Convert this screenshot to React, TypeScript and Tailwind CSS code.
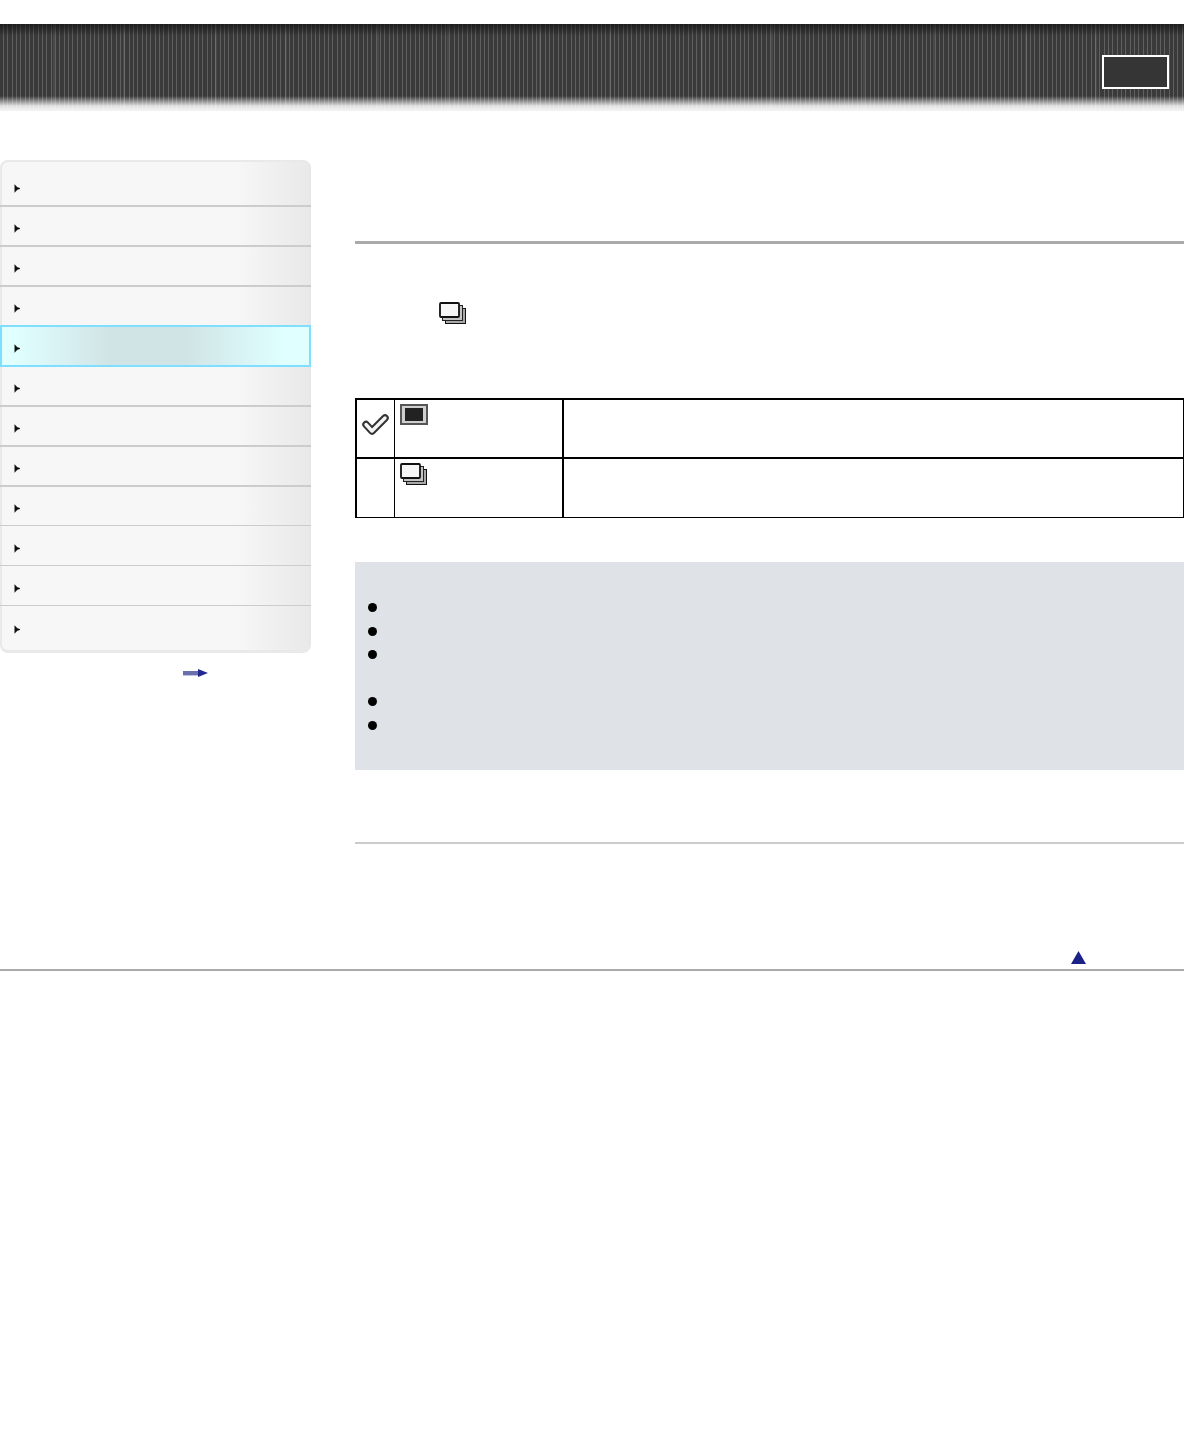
const navRowClass = [
  "-mx-[2px] flex h-[45px] items-end border-b-2 border-[#cccccc] pb-[12px] pl-[14px]",
  "-mx-[2px] flex h-[40px] items-end border-b-2 border-[#cccccc] pb-[12px] pl-[14px]",
  "-mx-[2px] flex h-[40px] items-end border-b-2 border-[#cccccc] pb-[12px] pl-[14px]",
  "-mx-[2px] flex h-[40px] items-end border-b-2 border-[#cccccc] pb-[12px] pl-[14px]",
  "-mx-[2px] -mt-[2px] flex h-[42px] items-end border-2 border-[#7fdfff] bg-[linear-gradient(to_right,#e0ffff_4%,#d0e4e6_35%,#d0e4e6_60%,#e0ffff_92%)] pb-[12px] pl-[12px]",
  "-mx-[2px] flex h-[40px] items-end border-b-2 border-[#cccccc] pb-[12px] pl-[14px]",
  "-mx-[2px] flex h-[40px] items-end border-b-2 border-[#cccccc] pb-[12px] pl-[14px]",
  "-mx-[2px] flex h-[40px] items-end border-b-2 border-[#cccccc] pb-[12px] pl-[14px]",
  "-mx-[2px] flex h-[39px] items-end border-b border-[#cccccc] pb-[12px] pl-[14px]",
  "-mx-[2px] flex h-[40px] items-end border-b border-[#cccccc] pb-[12px] pl-[14px]",
  "-mx-[2px] flex h-[40px] items-end border-b border-[#cccccc] pb-[12px] pl-[14px]",
  "-mx-[2px] flex h-[44px] items-start pl-[14px] pt-[19px]",
];

function NavArrow() {
  return (
    <svg width="6" height="9" viewBox="0 0 6 9" className="block blur-[0.3px]">
      <path d="M0.5 0.2 L3.4 3.2 L5.9 3.9 L5.9 5.1 L3.4 5.8 L0.5 8.8 Z" fill="#111" />
    </svg>
  );
}

function StackIcon() {
  return (
    <svg width="28" height="23" viewBox="0 0 28 23" className="block blur-[0.3px]">
      <rect x="6.5" y="6.5" width="20" height="15" fill="#a8a8a8" stroke="#111" />
      <rect x="3.5" y="3.5" width="20" height="15" fill="#c4c4c4" stroke="#222" />
      <rect x="1" y="1" width="19" height="14" rx="1" fill="#f6f6f6" stroke="#111" strokeWidth="1.8" />
    </svg>
  );
}

function CheckIcon() {
  return (
    <svg width="27" height="24" viewBox="0 0 27 24" className="block blur-[0.4px]">
      <path d="M4 11.5 L10 18 L23 5" fill="none" stroke="#333" strokeWidth="7.5" strokeLinejoin="round" strokeLinecap="round" />
      <path d="M4 11.5 L10 18 L23 5" fill="none" stroke="#f4f4f4" strokeWidth="3.4" strokeLinejoin="round" strokeLinecap="round" />
    </svg>
  );
}

export default function App() {
  return (
    <div className="min-h-[1440px] bg-white font-['Liberation_Sans',sans-serif]">
      <header className="mt-6 flex h-[87px] justify-end bg-[linear-gradient(to_bottom,rgba(15,15,15,0.7)_0px,rgba(15,15,15,0)_12px,rgba(255,255,255,0)_72px,rgba(255,255,255,0.85)_82px,#f4f4f4_87px),repeating-linear-gradient(to_right,transparent_0px,transparent_53px,rgba(255,255,255,0.08)_53px,rgba(255,255,255,0.08)_55px,transparent_55px,transparent_123px,rgba(255,255,255,0.08)_123px,rgba(255,255,255,0.08)_125px,transparent_125px,transparent_162px),repeating-linear-gradient(to_right,#3a3a3a_0px,#3a3a3a_3px,#606060_3px,#606060_4px,#3a3a3a_4px,#3a3a3a_7px,#606060_7px,#606060_8px,#3a3a3a_8px,#3a3a3a_12px,#606060_12px,#606060_13px)] pr-[15px] pt-[31px]">
        <div className="h-[34px] w-[67px] border-2 border-white bg-[#353535]" />
      </header>

      <div className="mt-[49px] flex items-start">
        <div className="w-[311px] shrink-0">
          <nav className="rounded-lg border-x-2 border-t-2 border-b-[3px] border-[#e9e9e9] border-r-[#e4e8ec] bg-[linear-gradient(to_right,#f7f7f7_76%,#e9e9e9_100%)]">
            {navRowClass.map((rowClass, row) => (
              <div key={row} className={rowClass}>
                <NavArrow />
              </div>
            ))}
          </nav>
          <div className="mt-[16px] flex justify-end pr-[103px]">
            <svg width="25" height="8" viewBox="0 0 25 8" className="block blur-[0.3px]">
              <rect x="0" y="2" width="17" height="4.4" fill="#6a6fb0" />
              <path d="M15 0 L25 4 L15 8 Z" fill="#23288f" />
            </svg>
          </div>
        </div>

        <main className="ml-[44px] min-w-0 flex-1">
          <div className="mt-[81px] h-[3px] bg-[#aaaaaa]" />
          <div className="ml-[84px] mt-[58px]">
            <StackIcon />
          </div>

          <div className="mt-[73px] border-b border-l-2 border-r border-t-2 border-black">
            <div className="flex h-[59px] border-b-2 border-black">
              <div className="w-[37px] shrink-0 pl-[5px] pt-[13px]">
                <CheckIcon />
              </div>
              <div className="w-[168px] shrink-0 border-l border-black pl-[5px] pt-[4px]">
                <div className="flex h-[21px] w-[28px] items-center justify-center border-2 border-[#555555] bg-[#cfcfcf] blur-[0.3px]">
                  <div className="h-[13px] w-[18px] bg-[#222]" />
                </div>
              </div>
              <div className="flex-1 border-l-2 border-black" />
            </div>
            <div className="flex h-[58px]">
              <div className="w-[37px] shrink-0" />
              <div className="w-[168px] shrink-0 border-l border-black pl-[5px] pt-[4px]">
                <StackIcon />
              </div>
              <div className="flex-1 border-l-2 border-black" />
            </div>
          </div>

          <ul className="mt-[44px] bg-[#dfe2e7] pb-[34px] pl-[13px] pt-[33px]">
            {[1, 1, 2, 1, 1].map((lines, i) => (
              <li key={i} className={lines === 2 ? "h-[47px] pt-[8px]" : "h-[23.6px] pt-[8px]"}>
                <div className="h-[9px] w-[9px] rounded-full bg-black" />
              </li>
            ))}
          </ul>

          <div className="mt-[72px] h-[2px] bg-[#cccccc]" />

          <div className="mt-[107px] flex justify-end pr-[98px]">
            <svg width="15" height="13" viewBox="0 0 15 13" className="block blur-[0.5px]">
              <path d="M7.5 0 L15 13 L0 13 Z" fill="#1a2288" />
            </svg>
          </div>
        </main>
      </div>

      <div className="mt-[5px] h-[2px] bg-[#aaaaaa]" />
    </div>
  );
}
